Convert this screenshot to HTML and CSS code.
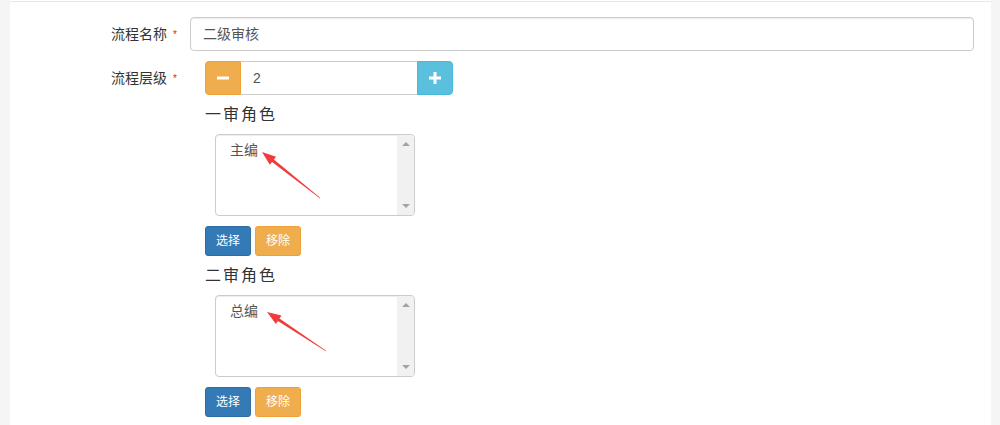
FILE: index.html
```html
<!DOCTYPE html>
<html lang="zh-CN">
<head>
<meta charset="utf-8">
<title>流程设置</title>
<link rel="stylesheet" href="styles.css">
</head>
<body>
<div class="panel">
  <div class="topline"></div>
  <div class="form">
    <div class="row">
      <div class="label">流程名称<span class="req">*</span></div>
      <div class="field"><div class="input">二级审核</div></div>
    </div>
    <div class="row row2">
      <div class="label">流程层级<span class="req">*</span></div>
      <div class="field field-indent">
        <div class="spinner">
          <div class="sp-btn sp-minus"><svg width="14" height="14" viewBox="0 0 14 14"><rect x="1" y="5.5" width="12" height="3" fill="#fff"/></svg></div>
          <div class="sp-input">2</div>
          <div class="sp-btn sp-plus"><svg width="14" height="14" viewBox="0 0 14 14"><rect x="1" y="5.5" width="12" height="3" fill="#fff"/><rect x="5.5" y="1" width="3" height="12" fill="#fff"/></svg></div>
        </div>
      </div>
    </div>
    <div class="roles">
      <div class="role">
        <div class="role-title">一审角色</div>
        <div class="listbox">
          <div class="items"><div class="item">主编</div></div>
          <div class="sbar"><span class="arr-up"></span><span class="arr-down"></span></div>
        </div>
        <div class="btns"><span class="btn btn-blue">选择</span><span class="btn btn-orange">移除</span></div>
      </div>
      <div class="role">
        <div class="role-title">二审角色</div>
        <div class="listbox">
          <div class="items"><div class="item">总编</div></div>
          <div class="sbar"><span class="arr-up"></span><span class="arr-down"></span></div>
        </div>
        <div class="btns"><span class="btn btn-blue">选择</span><span class="btn btn-orange">移除</span></div>
      </div>
    </div>
  </div>
</div>
<svg class="annot" width="1000" height="425" viewBox="0 0 1000 425">
  <polygon fill="#f23c3c" points="320.19,197.76 273.91,159.53 276.09,156.79 262,152 269.87,164.63 272.05,161.89 319.81,198.24"/>
  <polygon fill="#f23c3c" points="326.17,350.75 279.51,318.47 281.44,315.55 267,312 275.92,323.89 277.85,320.97 325.83,351.25"/>
</svg>
</body>
</html>
```

FILE: styles.css
```css
html, body {
  margin: 0;
  padding: 0;
}
body {
  background: #f5f5f5;
  font-family: "Liberation Sans", "Noto Sans CJK SC", sans-serif;
  font-size: 14px;
  color: #333;
  position: relative;
  height: 425px;
  overflow: hidden;
}
.panel {
  margin: 0 9px 0 10px;
  background: #fff;
  min-height: 425px;
  padding-top: 1px;
  box-sizing: border-box;
}
.topline {
  border-top: 1px solid #e8e8e8;
}
.form {
  padding-top: 15px;
}
.row {
  display: flex;
  align-items: center;
}
.row2 {
  margin-top: 10px;
}
.label {
  width: 170px;
  box-sizing: border-box;
  text-align: right;
  padding-right: 3px;
  line-height: 20px;
  color: #333;
}
.req {
  color: #d9261c;
  font-size: 10px;
  margin-left: 6px;
  vertical-align: top;
  position: relative;
  top: 1px;
}
.field {
  flex: 1;
  margin-left: 10px;
  margin-right: 17px;
}
.field-indent {
  padding-left: 15px;
}
.input {
  height: 34px;
  box-sizing: border-box;
  border: 1px solid #ccc;
  border-radius: 4px;
  padding: 6px 12px;
  line-height: 20px;
  color: #555;
  box-shadow: inset 0 1px 1px rgba(0,0,0,.075);
}
.spinner {
  display: flex;
  width: 248px;
  height: 34px;
}
.sp-btn {
  width: 36px;
  height: 34px;
  box-sizing: border-box;
  display: flex;
  align-items: center;
  justify-content: center;
}
.sp-minus {
  background: #f0ad4e;
  border: 1px solid #eea236;
  border-radius: 4px 0 0 4px;
}
.sp-plus {
  background: #5bc0de;
  border: 1px solid #46b8da;
  border-radius: 0 4px 4px 0;
}
.sp-input {
  flex: 1;
  box-sizing: border-box;
  border-top: 1px solid #ccc;
  border-bottom: 1px solid #ccc;
  padding: 6px 12px;
  line-height: 20px;
  color: #555;
  font-size: 14px;
}
.roles {
  margin-left: 195px;
}
.role-title {
  margin-top: 9px;
  font-size: 16px;
  line-height: 22px;
  letter-spacing: 2px;
  color: #333;
}
.listbox {
  margin: 8px 0 0 10px;
  width: 200px;
  height: 82px;
  box-sizing: border-box;
  border: 1px solid #ccc;
  border-radius: 4px;
  box-shadow: inset 0 1px 1px rgba(0,0,0,.075);
  display: flex;
  overflow: hidden;
}
.items {
  flex: 1;
  padding: 5px 14px;
}
.item {
  line-height: 20px;
  color: #555;
}
.sbar {
  width: 17px;
  background: #f1f1f1;
  display: flex;
  flex-direction: column;
  justify-content: space-between;
  align-items: center;
  padding: 7px 0 7px;
}
.arr-up {
  width: 0;
  height: 0;
  border-left: 4px solid transparent;
  border-right: 4px solid transparent;
  border-bottom: 4px solid #a3a3a3;
}
.arr-down {
  width: 0;
  height: 0;
  border-left: 4px solid transparent;
  border-right: 4px solid transparent;
  border-top: 4px solid #a3a3a3;
}
.btns {
  margin-top: 10px;
  display: flex;
  gap: 4px;
}
.btn {
  display: inline-block;
  padding: 5px 10px;
  font-size: 12px;
  line-height: 18px;
  border: 1px solid;
  border-radius: 3px;
  color: #fff;
}
.btn-blue {
  background: #337ab7;
  border-color: #2e6da4;
}
.btn-orange {
  background: #f0ad4e;
  border-color: #eea236;
}
.annot {
  position: absolute;
  top: 0;
  left: 0;
  pointer-events: none;
}
```
